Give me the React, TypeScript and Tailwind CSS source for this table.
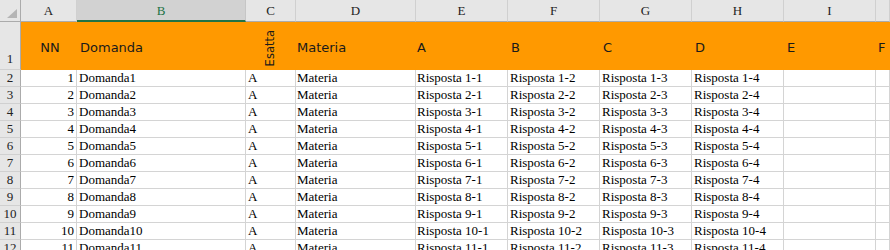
import React from "react";

const serif = { fontFamily: '"Liberation Serif", "Times New Roman", serif' };
const sans = { fontFamily: '"DejaVu Sans", "Noto Sans", sans-serif' };

const letters = ["A", "B", "C", "D", "E", "F", "G", "H", "I", ""];
const gridCols =
  "grid grid-cols-[21px_56px_169px_50px_120px_92px_92px_92px_92px_92px_1fr]";

function ColumnHeaders() {
  return (
    <div className={`${gridCols} h-[22px]`} style={serif}>
      <div className="relative border-r border-b border-[#ababab] bg-[#e6e6e6]">
        <div className="absolute right-[3px] bottom-[3px] h-0 w-0 [border-bottom:9px_solid_#b5b5b5] [border-left:10px_solid_transparent]" />
      </div>
      {letters.map((l, i) =>
        l === "B" ? (
          <div
            key={i}
            className="flex items-end justify-center border-r border-[#c6c6c6] border-b-2 border-b-[#217346] bg-[#d2d2d2] pb-[1px] text-[13px] leading-[16px] text-[#217346]"
          >
            {l}
          </div>
        ) : (
          <div
            key={i}
            className="flex items-end justify-center border-r border-r-[#d0d0d0] border-b border-b-[#ababab] bg-[#e6e6e6] pb-[2px] text-[13px] leading-[16px] text-[#222]"
          >
            {l}
          </div>
        )
      )}
    </div>
  );
}

function TitleRow() {
  const cell = "flex items-center bg-[#ff9900] pt-[4px] text-[13px] text-[#1a1a1a]";
  return (
    <div className={`${gridCols} h-[48px]`}>
      <div
        className="flex items-end justify-center border-r border-b border-r-[#ababab] border-b-[#d0d0d0] bg-[#e6e6e6] pb-[1px] text-[13px] text-[#222]"
        style={serif}
      >
        1
      </div>
      <div className={`${cell} justify-center pl-[2px]`} style={sans}>NN</div>
      <div className={`${cell} pl-[3px]`} style={sans}>Domanda</div>
      <div className="flex items-end justify-center overflow-hidden bg-[#ff9900] pb-[4px] text-[11.5px] text-[#1a1a1a]" style={sans}>
        <span className="rotate-180 leading-none [writing-mode:vertical-rl]">Esatta</span>
      </div>
      <div className={`${cell} pl-[1px]`} style={sans}>Materia</div>
      <div className={`${cell} pl-[1px]`} style={sans}>A</div>
      <div className={`${cell} pl-[3px]`} style={sans}>B</div>
      <div className={`${cell} pl-[3px]`} style={sans}>C</div>
      <div className={`${cell} pl-[3px]`} style={sans}>D</div>
      <div className={`${cell} pl-[3px]`} style={sans}>E</div>
      <div className={`${cell} pl-[2px]`} style={sans}>F</div>
    </div>
  );
}

function DataRow({ n }: { n: number }) {
  const c =
    "flex items-end border-r border-b border-[#d4d4d4] bg-white pb-[1px] text-[13px] leading-[15px] text-black whitespace-nowrap overflow-hidden";
  return (
    <div className={`${gridCols} h-[17px]`} style={serif}>
      <div className="flex items-end justify-center border-r border-b border-r-[#ababab] border-b-[#d0d0d0] bg-[#e6e6e6] pb-[1px] text-[13px] leading-[15px] text-[#222]">
        {n + 1}
      </div>
      <div className={`${c} justify-end pr-[2px]`}>{n}</div>
      <div className={`${c} pl-[2px]`}>Domanda{n}</div>
      <div className={`${c} pl-[2px]`}>A</div>
      <div className={`${c} pl-[1px]`}>Materia</div>
      <div className={`${c} pl-[1px]`}>Risposta {n}-1</div>
      <div className={`${c} pl-[2px]`}>Risposta {n}-2</div>
      <div className={`${c} pl-[2px]`}>Risposta {n}-3</div>
      <div className={`${c} pl-[2px]`}>Risposta {n}-4</div>
      <div className={c} />
      <div className={c} />
    </div>
  );
}

export default function App() {
  const rows = Array.from({ length: 11 }, (_, i) => i + 1);
  return (
    <div className="h-[250px] w-[890px] overflow-hidden bg-white">
      <ColumnHeaders />
      <TitleRow />
      {rows.map((n) => (
        <DataRow key={n} n={n} />
      ))}
    </div>
  );
}
